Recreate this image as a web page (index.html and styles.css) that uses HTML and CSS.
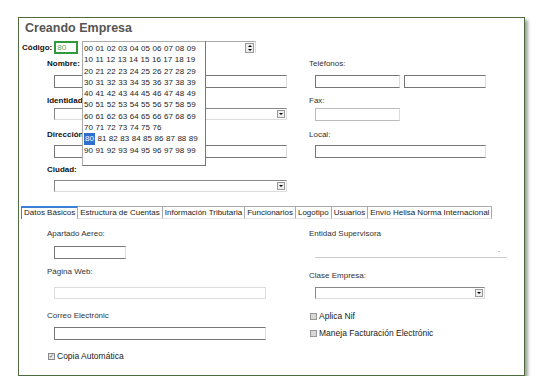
FILE: index.html
```html
<!DOCTYPE html>
<html lang="es">
<head>
    <meta charset="UTF-8">
    <title>Creando Empresa</title>
    <link rel="stylesheet" href="styles.css">
</head>
<body>
    <div class="panel">
        <h2 class="title">Creando Empresa</h2>

        <div class="code-row">
            <label class="bold">Código:</label>
            <div class="code-input">80</div>
            <div class="combo">
                <span class="spin"><i class="up"></i><i class="down"></i></span>
            </div>
        </div>

        <div class="form-grid">
            <label class="bold">Nombre:</label>
            <label class="lbl">Teléfonos:</label>

            <div class="field w-full"></div>
            <div class="pair">
                <div class="field w-85"></div>
                <div class="field w-82"></div>
            </div>

            <label class="bold">Identidad</label>
            <label class="lbl">Fax:</label>

            <div class="select w-full"><span class="arrow"></span></div>
            <div class="field light right w-85"></div>

            <label class="bold">Dirección:</label>
            <label class="lbl">Local:</label>

            <div class="field w-full"></div>
            <div class="field right w-171"></div>

            <label class="bold">Ciudad:</label>
            <span></span>

            <div class="select w-full"><span class="arrow"></span></div>
            <span></span>
        </div>

        <div class="tabs">
            <span class="tab active">Datos Básicos</span>
            <span class="tab">Estructura de Cuentas</span>
            <span class="tab">Información Tributaria</span>
            <span class="tab">Funcionarios</span>
            <span class="tab">Logotipo</span>
            <span class="tab">Usuarios</span>
            <span class="tab">Envío Helisa Norma Internacional</span>
        </div>

        <div class="tab-grid">
            <label class="lbl">Apartado Aereo:</label>
            <label class="lbl">Entidad Supervisora</label>

            <div class="field w-72"></div>
            <div class="select flat right w-192"><span class="arrow"></span></div>

            <label class="lbl">Página Web:</label>
            <label class="lbl down4">Clase Empresa:</label>

            <div class="field faint w-212"></div>
            <div class="select right w-170"><span class="arrow"></span></div>

            <label class="lbl">Correo Electrónic</label>
            <label class="check off"><i class="box"></i>Aplica Nif</label>

            <div class="field w-212"></div>
            <label class="check off"><i class="box"></i>Maneja Facturación Electrónic</label>

            <label class="check on"><i class="box">&#10003;</i>Copia Automática</label>
            <span></span>
        </div>

        <div class="listbox">
            <div>00 01 02 03 04 05 06 07 08 09</div>
            <div>10 11 12 13 14 15 16 17 18 19</div>
            <div>20 21 22 23 24 25 26 27 28 29</div>
            <div>30 31 32 33 34 35 36 37 38 39</div>
            <div>40 41 42 43 44 45 46 47 48 49</div>
            <div>50 51 52 53 54 55 56 57 58 59</div>
            <div>60 61 62 63 64 65 66 67 68 69</div>
            <div>70 71 72 73 74 75 76</div>
            <div><span class="picked">80</span> 81 82 83 84 85 86 87 88 89</div>
            <div>90 91 92 93 94 95 96 97 98 99</div>
        </div>
    </div>
</body>
</html>
```

FILE: styles.css
```css
body {
    margin: 0;
    background: #fff;
    font-family: 'Liberation Sans', Arial, sans-serif;
    font-size: 8px;
    color: #333;
}

.panel {
    position: relative;
    box-sizing: border-box;
    width: 507px;
    height: 359px;
    margin: 17px 0 0 18px;
    border: 1px solid #4d6b3e;
    box-shadow: 3px 3px 3px rgba(40, 60, 30, 0.45);
}

.title {
    margin: 2px 0 0 6px;
    font-size: 12.5px;
    line-height: 16px;
    font-weight: bold;
    color: #555;
}

.bold {
    font-weight: bold;
    color: #111;
    line-height: 12px;
}

.lbl {
    line-height: 12px;
    color: #333;
}

.code-row {
    display: flex;
    align-items: center;
    height: 13px;
    margin: 5px 0 0 3px;
}

.code-input {
    box-sizing: border-box;
    width: 24px;
    height: 13px;
    margin-left: 2px;
    padding-left: 1px;
    border: 2px solid #2f9a3c;
    color: #5ea85e;
    line-height: 9px;
}

.combo {
    box-sizing: border-box;
    display: flex;
    justify-content: flex-end;
    width: 174px;
    height: 12px;
    margin: -1px 0 0 4px;
    border-top: 1px solid #aaa;
    border-right: 1px solid #ddd;
}

.spin {
    display: flex;
    flex-direction: column;
    justify-content: space-around;
    align-items: center;
    width: 7px;
    margin: 1px 1px 0 0;
    border: 1px solid #999;
    background: #eee;
}

.spin i {
    width: 0;
    height: 0;
    border-left: 2px solid transparent;
    border-right: 2px solid transparent;
}

.spin .up { border-bottom: 2px solid #000; }
.spin .down { border-top: 2px solid #000; }

.form-grid {
    display: grid;
    grid-template-columns: 240px 198px;
    grid-template-rows: 17px 20px 13px 21px 16px 19px 16px 13px;
    column-gap: 22px;
    align-items: start;
    margin: 4px 0 0 28px;
}

.field {
    box-sizing: border-box;
    height: 13px;
    margin-left: 7px;
    border: 1px solid #777;
    border-right-color: #ddd;
    background: #fff;
}

.field.right,
.select.right {
    margin-left: 6px;
}

.field.light {
    border-color: #bbb;
    border-right-color: #ddd;
}

.field.faint {
    height: 12px;
    border-color: #ddd;
}

.pair {
    display: flex;
    gap: 4px;
    margin-left: 6px;
}

.pair .field {
    margin-left: 0;
}

.w-full { width: 233px; }
.w-85 { width: 85px; }
.w-82 { width: 82px; }
.w-171 { width: 171px; }
.w-72 { width: 72px; }
.w-212 { width: 212px; }
.w-192 { width: 192px; }
.w-170 { width: 170px; }

.select {
    box-sizing: border-box;
    display: flex;
    justify-content: flex-end;
    align-items: center;
    height: 12px;
    margin-left: 7px;
    border: 1px solid #888;
    border-right-color: #ddd;
    border-bottom-color: #ddd;
}

.select .arrow {
    display: flex;
    justify-content: center;
    align-items: center;
    box-sizing: border-box;
    width: 8px;
    height: 8px;
    margin-right: 1px;
    border: 1px solid #999;
    background: #eee;
}

.select .arrow::after {
    content: "";
    border-left: 2px solid transparent;
    border-right: 2px solid transparent;
    border-top: 2px solid #000;
}

.select.flat {
    border: none;
    border-bottom: 1px solid #ccc;
    height: 12px;
}

.select.flat .arrow {
    border: none;
    background: none;
    margin-right: 4px;
}

.select.flat .arrow::after {
    border-top-color: #999;
    border-top-width: 1px;
    border-left-width: 1.5px;
    border-right-width: 1.5px;
}

.tabs {
    display: flex;
    margin: 13px 0 0 2px;
}

.tab {
    box-sizing: border-box;
    height: 13px;
    padding: 0 2px;
    border: 1px solid #aaa;
    border-left: none;
    border-bottom-color: #e4e4e4;
    line-height: 11px;
    color: #222;
    white-space: nowrap;
}

.tab.active {
    border-left: 1px solid #777;
    border-top: 2px solid #3d7fd8;
    border-bottom: none;
    line-height: 10px;
}

.tab-grid {
    display: grid;
    grid-template-columns: 240px 198px;
    grid-template-rows: 18px 20px 21px 23px 17px 23px 12px;
    column-gap: 22px;
    align-items: start;
    margin: 9px 0 0 28px;
}

.down4 {
    margin-top: 4px;
}

.check {
    display: flex;
    align-items: center;
    gap: 2px;
    height: 12px;
    margin-left: 1px;
    color: #222;
    font-size: 8.5px;
}

.check .box {
    box-sizing: border-box;
    display: flex;
    justify-content: center;
    align-items: center;
    width: 7px;
    height: 7px;
    border: 1px solid #999;
    background: #d8d8d8;
    font-style: normal;
    font-size: 6px;
    line-height: 5px;
    color: #555;
}

.check.on .box {
    background: #e8e8e8;
    border-color: #888;
}

.listbox {
    position: absolute;
    left: 63px;
    top: 23px;
    box-sizing: border-box;
    width: 124px;
    height: 125px;
    padding: 1px 0 0 1px;
    background: #fff;
    border: 1px solid #aaa;
    border-right-color: #777;
    border-bottom-color: #777;
    color: #1c1c28;
    line-height: 11.3px;
    word-spacing: 0.3px;
}

.picked {
    display: inline-block;
    background: #2f6fd0;
    color: #fff;
    padding: 0 1px;
}
```
